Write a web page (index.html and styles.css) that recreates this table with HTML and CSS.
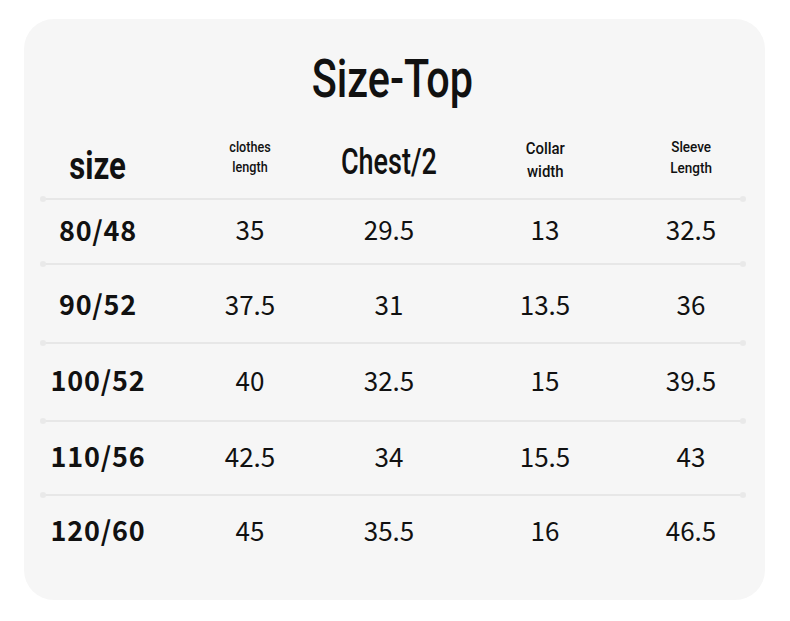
FILE: index.html
```html
<!DOCTYPE html>
<html>
<head>
<meta charset="utf-8">
<link rel="stylesheet" href="styles.css">
</head>
<body>
<div class="card">
  <h1 class="title"><span class="sq title-text">Size-Top</span></h1>
  <div class="table">
    <div class="row head">
      <div class="cell hc-size"><span class="sq h-size">size</span></div>
      <div class="cell hc-clothes"><span class="sq h-clothes">clothes<br>length</span></div>
      <div class="cell hc-chest"><span class="sq h-chest">Chest/2</span></div>
      <div class="cell hc-collar"><span class="sq h-collar">Collar<br>width</span></div>
      <div class="cell hc-sleeve"><span class="sq h-sleeve">Sleeve<br>Length</span></div>
    </div>
    <div class="sep"></div>
    <div class="row r1">
      <div class="cell lbl">80/48</div><div class="cell">35</div><div class="cell">29.5</div><div class="cell">13</div><div class="cell">32.5</div>
    </div>
    <div class="sep"></div>
    <div class="row r2">
      <div class="cell lbl">90/52</div><div class="cell">37.5</div><div class="cell">31</div><div class="cell">13.5</div><div class="cell">36</div>
    </div>
    <div class="sep"></div>
    <div class="row r3">
      <div class="cell lbl">100/52</div><div class="cell">40</div><div class="cell">32.5</div><div class="cell">15</div><div class="cell">39.5</div>
    </div>
    <div class="sep"></div>
    <div class="row r4">
      <div class="cell lbl">110/56</div><div class="cell">42.5</div><div class="cell">34</div><div class="cell">15.5</div><div class="cell">43</div>
    </div>
    <div class="sep"></div>
    <div class="row r5">
      <div class="cell lbl">120/60</div><div class="cell">45</div><div class="cell">35.5</div><div class="cell">16</div><div class="cell">46.5</div>
    </div>
  </div>
</div>
</body>
</html>
```
FILE: styles.css
```css
html, body { margin: 0; padding: 0; background: #ffffff; }
body { width: 790px; height: 621px; overflow: hidden; }
.card {
  margin: 19px 25px 0 24px;
  height: 581px;
  background: #f6f6f6;
  border-radius: 30px;
  box-sizing: border-box;
  padding: 0 0 0 18px;
  color: #111;
  font-family: "Noto Sans CJK SC", "Noto Sans", sans-serif;
}
.sq {
  display: inline-block;
  font-family: Roboto, "Liberation Sans", sans-serif;
  text-align: center;
  white-space: nowrap;
}
.title {
  margin: 0 0 26px -22px;
  padding-top: 30px;
  height: 60px;
  line-height: 60px;
  text-align: center;
  font-weight: 500;
}
.title-text {
  font-size: 53px;
  font-weight: 500;
  transform: scaleX(0.78);
}
.table { width: 702px; }
.row {
  display: grid;
  grid-template-columns: 112px 192px 86px 226px 66px;
  align-items: stretch;
}
.cell {
  display: flex;
  justify-content: center;
  align-items: center;
  white-space: nowrap;
  font-size: 26px;
  font-weight: 400;
  line-height: 1;
  padding-bottom: 5px;
  box-sizing: border-box;
}
.lbl { font-weight: 700; font-size: 27px; letter-spacing: 0.8px; }
.head { height: 63px; }
.r1 { height: 63px; }
.r2 { height: 77px; }
.r3 { height: 76px; }
.r4 { height: 72px; }
.r5 { height: 72px; }
.r2 .cell { padding-bottom: 0; }
.sep {
  height: 2px;
  background: #e7e7e7;
  position: relative;
}
.sep::before, .sep::after {
  content: "";
  position: absolute;
  top: -2px;
  width: 6px;
  height: 6px;
  border-radius: 50%;
  background: #e9e9e9;
}
.sep::before { left: -2px; }
.sep::after { right: -2px; }

.hc-size { padding-bottom: 2px; }
.h-size { font-size: 38px; font-weight: 700; line-height: 1; transform: scaleX(0.82); }
.hc-chest { padding-bottom: 10px; }
.h-chest { font-size: 36px; font-weight: 500; line-height: 1; transform: scaleX(0.75); }
.hc-clothes { padding-bottom: 19px; }
.h-clothes { font-size: 14px; line-height: 20px; font-weight: 500; transform: scaleX(0.9); }
.hc-collar { padding-bottom: 14px; }
.h-collar { font-size: 17px; line-height: 23px; font-weight: 500; transform: scaleX(0.88); }
.hc-sleeve { padding-bottom: 18px; }
.h-sleeve { font-size: 15px; line-height: 21px; font-weight: 500; transform: scaleX(0.9); }
```
